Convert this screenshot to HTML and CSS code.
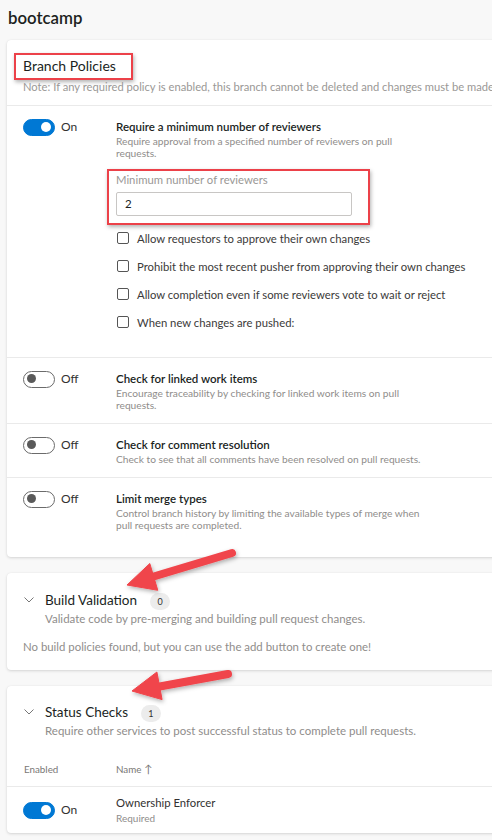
FILE: index.html
```html
<!DOCTYPE html>
<html lang="en">
<head>
<meta charset="utf-8">
<title>bootcamp - Branch Policies</title>
<link rel="stylesheet" href="styles.css">
</head>
<body>
<div class="page">
  <h1 class="page-title">bootcamp</h1>

  <section class="card">
    <div class="card-head">
      <div class="callout"><h2 class="card-title">Branch Policies</h2></div>
      <p class="note">Note: If any required policy is enabled, this branch cannot be deleted and changes must be made via pull request.</p>
    </div>

    <div class="policy policy-first">
      <div class="switch-cell"><span class="toggle on"><span class="knob"></span></span><span class="toggle-label">On</span></div>
      <div class="policy-body">
        <div class="policy-title">Require a minimum number of reviewers</div>
        <div class="policy-desc">Require approval from a specified number of reviewers on pull<br>requests.</div>
        <div class="callout field-callout">
          <div class="field-label">Minimum number of reviewers</div>
          <div class="field-input">2</div>
        </div>
        <ul class="checks">
          <li><span class="checkbox"></span>Allow requestors to approve their own changes</li>
          <li><span class="checkbox"></span>Prohibit the most recent pusher from approving their own changes</li>
          <li><span class="checkbox"></span>Allow completion even if some reviewers vote to wait or reject</li>
          <li><span class="checkbox"></span>When new changes are pushed:</li>
        </ul>
      </div>
    </div>

    <div class="policy">
      <div class="switch-cell"><span class="toggle"><span class="knob"></span></span><span class="toggle-label">Off</span></div>
      <div class="policy-body">
        <div class="policy-title">Check for linked work items</div>
        <div class="policy-desc">Encourage traceability by checking for linked work items on pull<br>requests.</div>
      </div>
    </div>

    <div class="policy">
      <div class="switch-cell"><span class="toggle"><span class="knob"></span></span><span class="toggle-label">Off</span></div>
      <div class="policy-body">
        <div class="policy-title">Check for comment resolution</div>
        <div class="policy-desc">Check to see that all comments have been resolved on pull requests.</div>
      </div>
    </div>

    <div class="policy policy-last">
      <div class="switch-cell"><span class="toggle"><span class="knob"></span></span><span class="toggle-label">Off</span></div>
      <div class="policy-body">
        <div class="policy-title">Limit merge types</div>
        <div class="policy-desc">Control branch history by limiting the available types of merge when<br>pull requests are completed.</div>
      </div>
    </div>
  </section>

  <section class="card group-card build-card">
    <div class="group-head">
      <svg class="chevron" width="10" height="6" viewBox="0 0 10 6"><polyline points="0.5,0.5 5,5 9.5,0.5" fill="none" stroke="#777" stroke-width="1"/></svg>
      <h2 class="group-title">Build Validation</h2>
      <span class="count">0</span>
    </div>
    <p class="group-desc">Validate code by pre-merging and building pull request changes.</p>
    <p class="empty">No build policies found, but you can use the add button to create one!</p>
  </section>

  <section class="card group-card status-card">
    <div class="group-head">
      <svg class="chevron" width="10" height="6" viewBox="0 0 10 6"><polyline points="0.5,0.5 5,5 9.5,0.5" fill="none" stroke="#777" stroke-width="1"/></svg>
      <h2 class="group-title">Status Checks</h2>
      <span class="count">1</span>
    </div>
    <p class="group-desc">Require other services to post successful status to complete pull requests.</p>
    <div class="table-head">
      <span class="col-enabled">Enabled</span>
      <span class="col-name">Name <span class="sort">↑</span></span>
    </div>
    <div class="table-row">
      <div class="switch-cell"><span class="toggle on"><span class="knob"></span></span><span class="toggle-label">On</span></div>
      <div class="row-name">
        <div class="row-title">Ownership Enforcer</div>
        <div class="row-sub">Required</div>
      </div>
    </div>
  </section>
</div>

<svg class="annotations" width="492" height="840" viewBox="0 0 492 840">
  <defs>
    <filter id="sh" x="-20%" y="-20%" width="140%" height="140%">
      <feDropShadow dx="1" dy="2" stdDeviation="2" flood-color="#000" flood-opacity="0.3"/>
    </filter>
  </defs>
  <g filter="url(#sh)" fill="#f0454b" stroke="#f0454b">
    <line x1="232" y1="553" x2="152" y2="577" stroke-width="8" stroke-linecap="round"/>
    <polygon points="127,585 149.8,563.5 157.8,590.3" stroke-width="1" stroke-linejoin="round"/>
    <line x1="228" y1="674" x2="157" y2="687" stroke-width="8" stroke-linecap="round"/>
    <polygon points="132,691 156.9,672 162.1,699.6" stroke-width="1" stroke-linejoin="round"/>
  </g>
</svg>
</body>
</html>
```

FILE: styles.css
```css
* { box-sizing: border-box; }

html, body {
  margin: 0;
  padding: 0;
  background: #f8f8f8;
  overflow: hidden;
}

body {
  font-family: "Segoe UI", Lato, "Open Sans", sans-serif;
  color: #201f1e;
  width: 492px;
  height: 840px;
  position: relative;
}

.page {
  padding: 6px 0 0 0;
}

.page-title {
  margin: 0 0 0 8px;
  font-size: 16.8px;
  font-weight: 600;
  line-height: 24px;
  height: 34px;
}

.card {
  background: #fff;
  margin-left: 7px;
  margin-right: -20px;
  border-radius: 4px;
  box-shadow: 0 1px 3px rgba(0, 0, 0, 0.14), 0 0 1px rgba(0, 0, 0, 0.08);
}

/* header */
.card-head {
  padding: 13px 0 11px 16px;
  border-bottom: 1px solid #eaeaea;
}

.callout {
  border: 2px solid #ec4149;
  box-shadow: 1px 2px 4px rgba(0, 0, 0, 0.3);
}

.card-head .callout {
  display: inline-block;
  margin-left: -9px;
  width: 119px;
  padding: 1px 0 2px 7px;
}

.card-title {
  margin: 0;
  font-size: 14px;
  font-weight: 400;
  line-height: 20px;
}

.note {
  margin: 0;
  font-size: 11.2px;
  line-height: 14px;
  color: #9a9896;
  white-space: nowrap;
}

/* policies */
.policy {
  display: grid;
  grid-template-columns: 93px 1fr;
  padding: 13px 0 12px 16px;
  border-bottom: 1px solid #eaeaea;
}

.policy-first { padding-bottom: 21px; }
.policy-last { border-bottom: none; padding-bottom: 26px; }

.switch-cell {
  display: flex;
  align-items: center;
  gap: 6px;
  height: 16px;
}

.toggle {
  position: relative;
  display: inline-block;
  width: 32px;
  height: 17px;
  border-radius: 9px;
  border: 1.5px solid #6b6b6b;
  background: #fff;
}

.toggle .knob {
  position: absolute;
  top: 2.5px;
  left: 3px;
  width: 9px;
  height: 9px;
  border-radius: 50%;
  background: #5a5a5a;
}

.toggle.on {
  background: #0078d4;
  border-color: #0078d4;
}

.toggle.on .knob {
  left: auto;
  right: 3px;
  width: 10px;
  height: 10px;
  top: 2px;
  background: #fff;
}

.toggle-label {
  font-size: 12px;
  line-height: 16px;
  color: #323130;
}

.policy-title {
  font-size: 11.5px;
  font-weight: 600;
  line-height: 16px;
}

.policy-desc {
  font-size: 10.2px;
  line-height: 12px;
  color: #8f8d8b;
}

.field-callout {
  margin: 10px 0 0 -9px;
  width: 263px;
  padding: 0 16px 7px 7px;
}

.field-label {
  font-size: 11.3px;
  line-height: 16px;
  padding-top: 1px;
  height: 21px;
  color: #9a9896;
}

.field-input {
  width: 236px;
  height: 24px;
  border: 1px solid #c8c6c4;
  border-radius: 2px;
  font-size: 11.5px;
  line-height: 22px;
  padding-left: 8px;
  color: #201f1e;
}

.checks {
  list-style: none;
  margin: -1px 0 0 0;
  padding: 0;
}

.checks li {
  display: flex;
  align-items: center;
  height: 28px;
  font-size: 11.3px;
  color: #3b3a39;
  white-space: nowrap;
}

.checkbox {
  width: 12px;
  height: 12px;
  margin: 0 8px 0 1px;
  border: 1px solid #555;
  border-radius: 2px;
  flex: none;
}

/* groups */
.group-card {
  padding: 17px 0 16px 16px;
}

.build-card { margin-top: 16px; }
.status-card { margin-top: 16px; padding-top: 16px; padding-bottom: 0; }

.group-head {
  display: flex;
  align-items: center;
  height: 20px;
}

.chevron {
  margin: 0 11px 0 1px;
  flex: none;
}

.group-title {
  margin: 0;
  font-size: 13.5px;
  font-weight: 400;
  line-height: 20px;
}

.count {
  display: inline-flex;
  align-items: center;
  justify-content: center;
  margin-left: 13px;
  width: 20px;
  height: 17px;
  border-radius: 9px;
  background: #ececec;
  font-size: 9px;
  color: #323130;
  position: relative;
  top: 1px;
}

.group-desc {
  margin: 2px 0 0 22px;
  font-size: 11.5px;
  line-height: 14px;
  color: #8f8d8b;
  white-space: nowrap;
}

.empty {
  margin: 14px 0 0 0;
  font-size: 11.4px;
  line-height: 14px;
  color: #8f8d8b;
  white-space: nowrap;
}

.table-head {
  display: grid;
  grid-template-columns: 92px 1fr;
  margin: 24px 0 0 -16px;
  padding: 0 0 10px 17px;
  border-bottom: 1px solid #eaeaea;
  font-size: 9.8px;
  line-height: 14px;
  color: #7a7876;
}

.sort { font-size: 11px; }

.table-row {
  display: grid;
  grid-template-columns: 93px 1fr;
  align-items: center;
  padding: 8px 0 8px 0;
}

.row-title {
  font-size: 11.3px;
  line-height: 16px;
  color: #323130;
}

.row-sub {
  font-size: 10px;
  line-height: 14px;
  color: #8f8d8b;
}

/* annotation overlay */
.annotations {
  position: absolute;
  left: 0;
  top: 0;
  pointer-events: none;
}
```
